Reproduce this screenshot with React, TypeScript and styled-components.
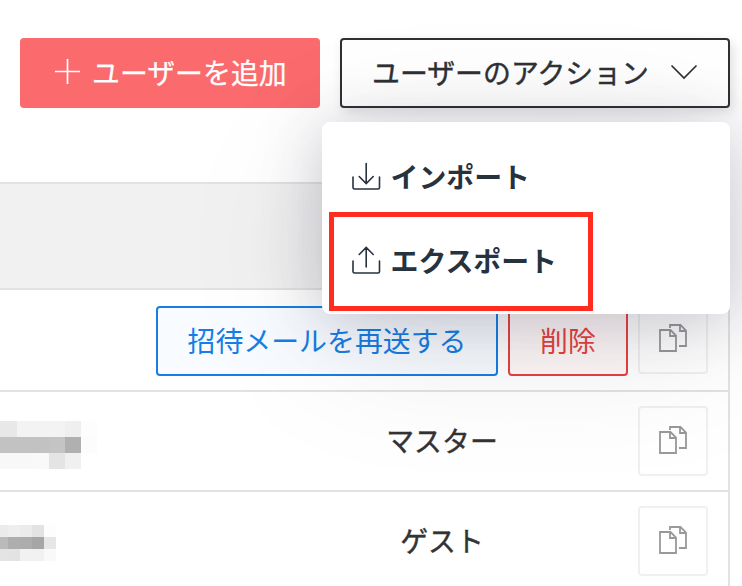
import React from "react";
import styled, { createGlobalStyle } from "styled-components";

const GlobalStyle = createGlobalStyle`
  * { box-sizing: border-box; }
  body {
    margin: 0;
    background: #fff;
    overflow: hidden;
    font-family: "Noto Sans CJK JP", "Noto Sans", sans-serif;
    font-size: 27.9px;
    line-height: 28px;
    color: #323338;
  }
  button { font: inherit; margin: 0; }
`;

const Page = styled.main`
  width: 742px;
  height: 586px;
  overflow: hidden;
`;

const Toolbar = styled.header`
  position: relative;
  display: flex;
  gap: 20px;
  height: 182px;
  padding: 38px 12px 0 20px;
  align-items: flex-start;
`;

const AddButton = styled.button`
  display: flex;
  align-items: center;
  width: 300px;
  height: 70px;
  padding: 0 0 2px 34px;
  gap: 11px;
  border: 0;
  border-radius: 4px;
  background: #fb6a6d;
  color: #fff;
  white-space: nowrap;
  -webkit-text-stroke: 0.25px currentColor;
  svg { flex: none; margin-top: -1px; }
`;

const ActionButton = styled.button`
  display: flex;
  align-items: center;
  width: 390px;
  height: 70px;
  padding: 0 0 2px 30px;
  gap: 20px;
  border: 2px solid #303135;
  border-radius: 4px;
  background: #fff;
  color: #303135;
  white-space: nowrap;
  -webkit-text-stroke: 0.4px currentColor;
  box-shadow: 3px 4px 12px rgba(0, 0, 0, 0.12);
  svg { flex: none; margin-top: -1px; }
`;

const Menu = styled.div`
  position: absolute;
  z-index: 2;
  top: 122px;
  left: 322px;
  width: 408px;
  height: 192px;
  padding: 13px 0 0 6.5px;
  border-radius: 8px;
  background: #fff;
  box-shadow: 0 30px 150px rgba(0, 0, 0, 0.1), 0 5px 60px rgba(50, 50, 93, 0.22);
`;

const MenuItem = styled.div<{ $marked?: boolean }>`
  display: flex;
  align-items: ${(p) => (p.$marked ? "flex-start" : "center")};
  gap: 10px;
  width: 264px;
  height: ${(p) => (p.$marked ? "98.5px" : "77px")};
  padding: ${(p) => (p.$marked ? "29px 0 0 17px" : "5px 0 0 22px")};
  border: ${(p) => (p.$marked ? "5px solid #ff2c1f" : "0")};
  color: #27323f;
  font-weight: 700;
  white-space: nowrap;
  svg { flex: none; margin-top: ${(p) => (p.$marked ? "-1px" : "0")}; }
`;

const Table = styled.section`
  width: 730px;
  height: 404px;
  border-top: 2px solid #e2e2e2;
  border-right: 2px solid #e2e2e2;
`;

const TableHead = styled.div`
  height: 106px;
  background: #f1f1f1;
  border-bottom: 2px solid #e2e2e2;
`;

const Row = styled.div<{ $first?: boolean }>`
  display: flex;
  justify-content: flex-end;
  height: ${(p) => (p.$first ? 102 : 100)}px;
  padding: 14px 20px 0 0;
  border-bottom: 2px solid #e2e2e2;
`;

const tones = {
  blue: { ink: "#167ee6", fill: "#f8fbff" },
  red: { ink: "#e94141", fill: "#fff8f8" },
};

const RowButton = styled.button<{ $tone: "blue" | "red"; $width: number }>`
  width: ${(p) => p.$width}px;
  height: 70px;
  margin: 2px 10px 0 0;
  padding: 0 0 2px;
  border: 2px solid ${(p) => tones[p.$tone].ink};
  border-radius: 4px;
  background: ${(p) => tones[p.$tone].fill};
  color: ${(p) => tones[p.$tone].ink};
  white-space: nowrap;
`;

const CopyButton = styled.button`
  display: flex;
  align-items: center;
  justify-content: center;
  flex: none;
  width: 70px;
  height: 70px;
  padding: 0 0 2px;
  border: 2px solid #f0f0f0;
  border-radius: 4px;
  background: #fff;
`;

const Role = styled.div`
  display: flex;
  align-items: center;
  justify-content: center;
  width: 392px;
  height: 70px;
  padding-bottom: 3px;
  color: #333;
  -webkit-text-stroke: 0.4px currentColor;
`;

const NameCell = styled.div`
  flex: 1;
`;

const Mosaic = styled.div<{ $first: number; $cell: number; $count: number; $top: number }>`
  display: grid;
  grid-template-columns: ${(p) => p.$first}px repeat(${(p) => p.$count - 1}, ${(p) => p.$cell}px);
  grid-auto-rows: ${(p) => p.$cell}px;
  margin-top: ${(p) => p.$top}px;
`;

const Tile = styled.span<{ $shade: string }>`
  background: #${(p) => p.$shade};
`;

const nameA = [
  "e8e8e8 f3f3f3 f3f3f3 f3f3f3 efefef fdfdfd",
  "c2c2c2 c2c2c2 c2c2c2 c4c4c4 b0b0b0 fcfcfc",
  "f8f8f8 f8f8f8 f9f9f9 e4e4e4 f0f0f0 ffffff",
];
const nameB = [
  "ebebeb eeeeee ebebeb e3e3e3 fdfdfd",
  "bababa aeaeae adadad a6a6a6 e6e6e6",
  "e4e4e4 e3e3e3 f1f1f1 f1f1f1 f9f9f9",
];

function MaskedName({ rows, first, cell, top }: { rows: string[]; first: number; cell: number; top: number }) {
  const tiles = rows.flatMap((r) => r.split(" "));
  return (
    <Mosaic $first={first} $cell={cell} $count={tiles.length / rows.length} $top={top}>
      {tiles.map((shade, i) => (
        <Tile key={i} $shade={shade} />
      ))}
    </Mosaic>
  );
}

const PlusIcon = () => (
  <svg width="27" height="27" viewBox="0 0 27 27" stroke="currentColor" strokeWidth="1.7">
    <path d="M1 13.5H26M13.5 1V26" />
  </svg>
);

const ChevronIcon = () => (
  <svg width="30" height="18" viewBox="0 0 30 18" fill="none" stroke="currentColor" strokeWidth="1.7">
    <path d="M2.5 2.5L15 15L27.5 2.5" />
  </svg>
);

const TransferIcon = ({ up }: { up?: boolean }) => (
  <svg width="30" height="30" viewBox="0 0 30 30" fill="none" stroke="currentColor" strokeWidth="1.6" strokeLinecap="round">
    <path d="M2 16V26.5Q2 28 3.5 28H27Q28.5 28 28.5 26.5V16" />
    <path d={up ? "M15.2 22V2.5M8.2 9.5L15.2 2.5L22.2 9.5" : "M15.2 2.5V22.5M8.2 15.5L15.2 22.5L22.2 15.5"} />
  </svg>
);

const CopyIcon = () => (
  <svg width="28" height="28" viewBox="0 0 28 28" fill="none" stroke="#999" strokeWidth="1.8">
    <path d="M1 6H11.5L17 11.5V27H1ZM11 6V12H17" />
    <path d="M11 4V1H21.5L27 6.5V22H20M21 1V7H27" />
  </svg>
);

export default function App() {
  return (
    <Page>
      <GlobalStyle />
      <Toolbar>
        <AddButton><PlusIcon />ユーザーを追加</AddButton>
        <ActionButton>ユーザーのアクション<ChevronIcon /></ActionButton>
        <Menu>
          <MenuItem><TransferIcon />インポート</MenuItem>
          <MenuItem $marked><TransferIcon up />エクスポート</MenuItem>
        </Menu>
      </Toolbar>
      <Table>
        <TableHead />
        <Row $first>
          <RowButton $tone="blue" $width={342}>招待メールを再送する</RowButton>
          <RowButton $tone="red" $width={120}>削除</RowButton>
          <CopyButton><CopyIcon /></CopyButton>
        </Row>
        <Row>
          <NameCell><MaskedName rows={nameA} first={17.4} cell={16} top={15.3} /></NameCell>
          <Role>マスター</Role>
          <CopyButton><CopyIcon /></CopyButton>
        </Row>
        <Row>
          <NameCell><MaskedName rows={nameB} first={8} cell={12} top={19.3} /></NameCell>
          <Role>ゲスト</Role>
          <CopyButton><CopyIcon /></CopyButton>
        </Row>
      </Table>
    </Page>
  );
}
